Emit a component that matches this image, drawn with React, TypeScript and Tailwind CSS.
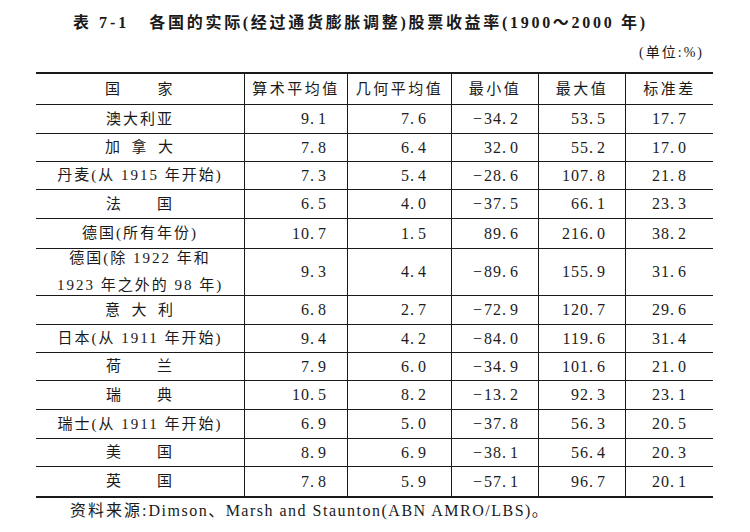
import React from "react";

type Row = { name: React.ReactNode; v: string[]; h: number };

const rows: Row[] = [
  { name: "澳大利亚", v: ["9.1", "7.6", "−34.2", "53.5", "17.7"], h: 29 },
  { name: "加\u2002拿\u2002大", v: ["7.8", "6.4", "32.0", "55.2", "17.0"], h: 28 },
  { name: "丹麦(从 1915 年开始)", v: ["7.3", "5.4", "−28.6", "107.8", "21.8"], h: 28 },
  { name: "法\u3000\u3000国", v: ["6.5", "4.0", "−37.5", "66.1", "23.3"], h: 29 },
  { name: "德国(所有年份)", v: ["10.7", "1.5", "89.6", "216.0", "38.2"], h: 30 },
  {
    name: (
      <span className="flex flex-col items-center leading-[27px]">
        <span>德国(除 1922 年和</span>
        <span>1923 年之外的 98 年)</span>
      </span>
    ),
    v: ["9.3", "4.4", "−89.6", "155.9", "31.6"],
    h: 47,
  },
  { name: "意\u2002大\u2002利", v: ["6.8", "2.7", "−72.9", "120.7", "29.6"], h: 29 },
  { name: "日本(从 1911 年开始)", v: ["9.4", "4.2", "−84.0", "119.6", "31.4"], h: 28 },
  { name: "荷\u3000\u3000兰", v: ["7.9", "6.0", "−34.9", "101.6", "21.0"], h: 28 },
  { name: "瑞\u3000\u3000典", v: ["10.5", "8.2", "−13.2", "92.3", "23.1"], h: 29 },
  { name: "瑞士(从 1911 年开始)", v: ["6.9", "5.0", "−37.8", "56.3", "20.5"], h: 29 },
  { name: "美\u3000\u3000国", v: ["8.9", "6.9", "−38.1", "56.4", "20.3"], h: 28 },
  { name: "英\u3000\u3000国", v: ["7.8", "5.9", "−57.1", "96.7", "20.1"], h: 29 },
];

const numPad = ["pr-[20px]", "pr-[24px]", "pr-[19px]", "pr-[19px]", "pr-[26px]"];
const numW = ["w-[103px]", "w-[104px]", "w-[87px]", "w-[87px]", "w-[87px]"];

function Num({ s }: { s: string }) {
  const neg = s.startsWith("−");
  const body = neg ? s.slice(1) : s;
  const [a, b] = body.split(".");
  return (
    <span className="text-[16px] tracking-[1px] text-[#1c1c1c]">
      {neg && <span className="mr-[1px]">−</span>}
      {a}
      <span className="mr-[3px]">.</span>
      {b}
    </span>
  );
}

export default function App() {
  const font = { fontFamily: "'Liberation Serif', 'Noto Sans CJK SC', serif" };
  return (
    <div className="w-[750px] h-[532px] bg-white text-[#1a1a1a] overflow-hidden" style={font}>
      <div className="flex items-center h-[46px] pl-[73px]">
        <span className="text-[16px] font-bold tracking-[3px]">表 7-1</span>
        <span className="ml-[20px] text-[16px] font-bold tracking-[2.7px]">
          各国的实际(经过通货膨胀调整)股票收益率(1900～2000 年)
        </span>
      </div>
      <div className="flex justify-end pr-[46px] -mt-[5px] h-[22px] items-center text-[14px] tracking-[2px]">
        (单位:%)
      </div>
      <div className="ml-[36px] mt-[9px] w-[677px] border-t-2 border-b-2 border-[#1a1a1a]">
        <div className="flex h-[31px] border-b border-[#1a1a1a] text-[15px] tracking-[2.5px]">
          <div className="w-[209px] border-r border-[#1a1a1a] flex items-center justify-center">国　　家</div>
          <div className="w-[103px] border-r border-[#1a1a1a] flex items-center justify-center">算术平均值</div>
          <div className="w-[104px] border-r border-[#1a1a1a] flex items-center justify-center">几何平均值</div>
          <div className="w-[87px] border-r border-[#1a1a1a] flex items-center justify-center">最小值</div>
          <div className="w-[87px] border-r border-[#1a1a1a] flex items-center justify-center">最大值</div>
          <div className="w-[87px] flex items-center justify-center">标准差</div>
        </div>
        {rows.map((r, i) => (
          <div
            key={i}
            className={`flex ${i < rows.length - 1 ? "border-b border-[#1a1a1a]" : ""}`}
            style={{ height: r.h }}
          >
            <div className="w-[209px] border-r border-[#1a1a1a] flex items-center justify-center text-[15px] tracking-[2px]">
              {r.name}
            </div>
            {r.v.map((s, j) => (
              <div
                key={j}
                className={`${numW[j]} ${numPad[j]} ${j < 4 ? "border-r border-[#1a1a1a]" : ""} flex items-center justify-end`}
              >
                <Num s={s} />
              </div>
            ))}
          </div>
        ))}
      </div>
      <div className="pl-[70px] mt-[3px] flex items-baseline leading-[20px]">
        <span className="text-[16px] tracking-[2px]">资料来源:</span>
        <span className="text-[16px] tracking-[1.5px]">Dimson、Marsh and Staunton(ABN AMRO/LBS)。</span>
      </div>
    </div>
  );
}
